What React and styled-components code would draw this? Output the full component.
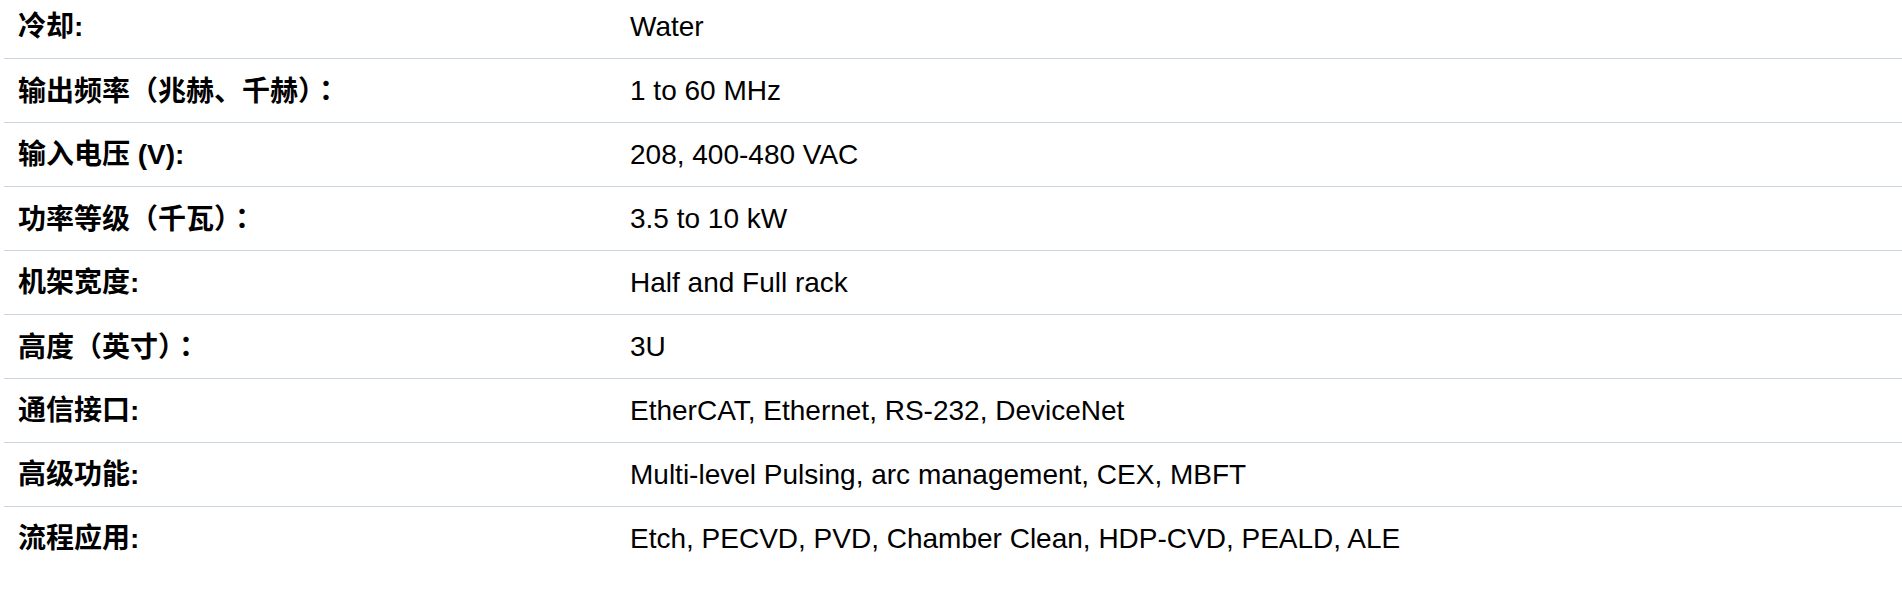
import React from 'react'
import styled, { createGlobalStyle } from 'styled-components'

const specs = [
  { label: '冷却:', value: 'Water' },
  { label: '输出频率（兆赫、千赫）：', value: '1 to 60 MHz' },
  { label: '输入电压 (V):', value: '208, 400-480 VAC' },
  { label: '功率等级（千瓦）：', value: '3.5 to 10 kW' },
  { label: '机架宽度:', value: 'Half and Full rack' },
  { label: '高度（英寸）：', value: '3U' },
  { label: '通信接口:', value: 'EtherCAT, Ethernet, RS-232, DeviceNet' },
  { label: '高级功能:', value: 'Multi-level Pulsing, arc management, CEX, MBFT' },
  { label: '流程应用:', value: 'Etch, PECVD, PVD, Chamber Clean, HDP-CVD, PEALD, ALE' },
]

const GlobalStyle = createGlobalStyle`
  html, body {
    margin: 0;
    padding: 0;
    background: #ffffff;
    overflow: hidden;
  }
  body {
    font-family: "Liberation Sans", Arial, "Noto Sans CJK SC", sans-serif;
    color: #000000;
  }
`

// the full-width colon sits centred in its cell in the original
const renderLabel = (text) => {
  if (text.endsWith('：')) {
    return (
      <>
        {text.slice(0, -1)}
        <WideColon>：</WideColon>
      </>
    )
  }
  return text
}

const App = () => {
  return (
    <>
      <GlobalStyle />
      <Table>
        {specs.map((row, i) => (
          <Row key={i} last={i === specs.length - 1}>
            <Label>{renderLabel(row.label)}</Label>
            <Value>{row.value}</Value>
          </Row>
        ))}
      </Table>
    </>
  )
}

export default App

const Table = styled.div`
  display: flex;
  flex-direction: column;
  margin: -5px 0 0 4px;
`

const Row = styled.div`
  display: grid;
  grid-template-columns: 612px 1fr;
  align-items: center;
  height: 64px;
  box-sizing: border-box;
  border-bottom: 1px solid ${({ last }) => (last ? 'transparent' : '#c9d3e2')};
`

const Cell = styled.div`
  padding-left: 14px;
  font-size: 28px;
  line-height: 1.2;
  white-space: nowrap;
  color: #000000;
`

const Label = styled(Cell)`
  font-family: "Liberation Sans", Arial, "Noto Sans CJK SC", sans-serif;
  font-weight: 700;
`

const WideColon = styled.span`
  font-family: "Noto Sans CJK JP", "Noto Sans CJK SC", sans-serif;
`

const Value = styled(Cell)`
  font-weight: 400;
`
